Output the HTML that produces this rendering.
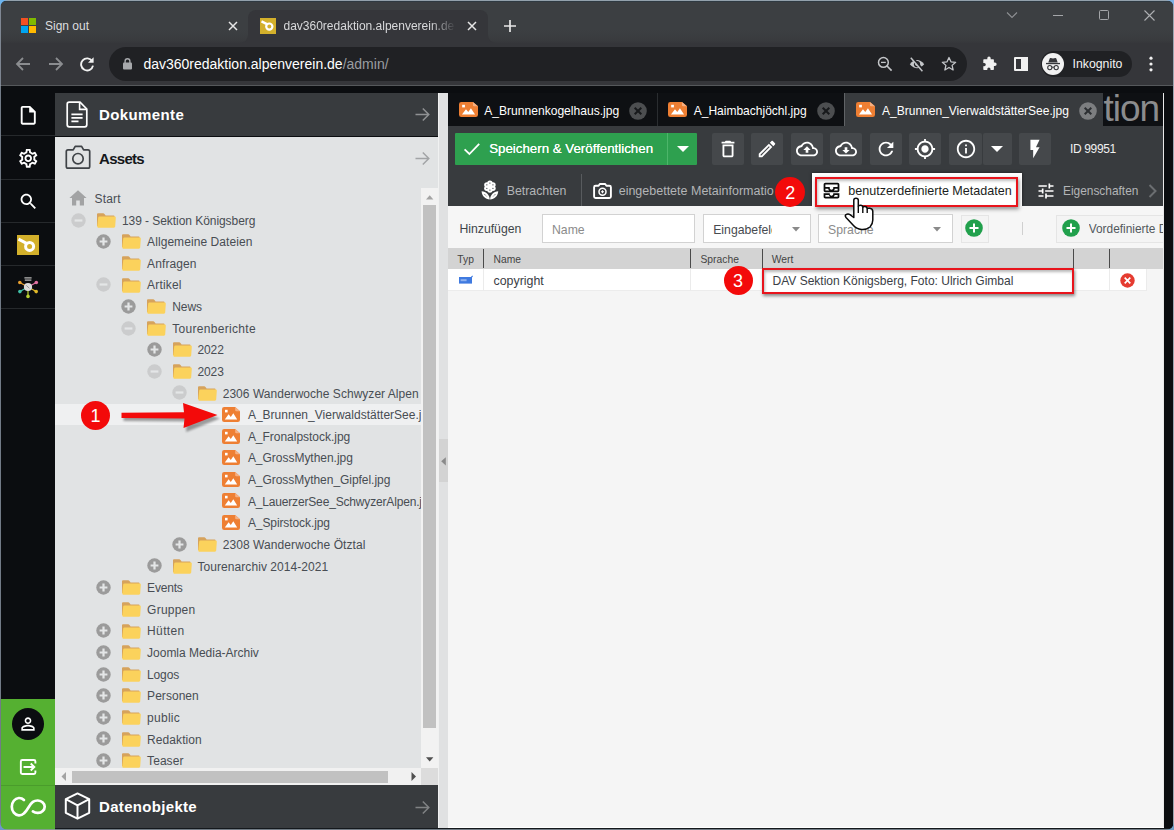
<!DOCTYPE html>
<html><head><meta charset="utf-8"><title>dav360redaktion</title>
<style>
*{box-sizing:border-box}
html,body{margin:0;padding:0}
body{width:1174px;height:830px;position:relative;overflow:hidden;background:#0b0d10;font-family:"Liberation Sans",sans-serif;font-size:12px;color:#3b4046}
.a{position:absolute}
.ic{position:absolute;display:block}
.t{position:absolute;white-space:nowrap;line-height:18px}
.tl{position:absolute;white-space:nowrap;line-height:18px;font-size:12px;color:#484d53}
.tb{position:absolute;top:133px;height:32px;width:32px;background:#45484b;border-radius:2px}
.tb svg{position:absolute;left:0;top:0}
</style></head><body>

<!-- ================= CHROME FRAME ================= -->
<div class="a" id="frame" style="left:0;top:0;width:1174px;height:44px;background:linear-gradient(180deg,#3c3f42 0,#3c3f42 30px,#393b3e 40px,#35363a 44px)"></div>
<div class="a" id="toolbar" style="left:0;top:43px;width:1174px;height:42px;background:#35363a"></div>
<div class="a" style="left:0;top:85px;width:1174px;height:1px;background:#55585b"></div>
<!-- active tab -->
<div class="a" style="left:247.5px;top:10px;width:240.5px;height:34px;background:#35363a;border-radius:8px 8px 0 0"></div>
<svg class="ic" style="left:239.5px;top:35px" width="8" height="8"><path d="M8 0 V8 H0 A8 8 0 0 0 8 0Z" fill="#35363a"/></svg>
<svg class="ic" style="left:488px;top:35px" width="8" height="8"><path d="M0 0 V8 H8 A8 8 0 0 1 0 0Z" fill="#35363a"/></svg>
<!-- MS logo -->
<div class="a" style="left:21px;top:18px;width:7px;height:7px;background:#f25022"></div>
<div class="a" style="left:29px;top:18px;width:7px;height:7px;background:#7fba00"></div>
<div class="a" style="left:21px;top:26px;width:7px;height:7px;background:#00a4ef"></div>
<div class="a" style="left:29px;top:26px;width:7px;height:7px;background:#ffb900"></div>
<div class="t" style="left:45px;top:17px;font-size:12px;color:#dcdddf">Sign out</div>
<svg class="ic" style="left:227.5px;top:21px" width="10" height="10" viewBox="0 0 10 10"><path d="M1 1 L9 9 M9 1 L1 9" stroke="#e6e6e6" stroke-width="1.5"/></svg>
<!-- favicon -->
<svg class="ic" style="left:260px;top:18px" width="16" height="16" viewBox="0 0 16 16"><rect width="16" height="16" fill="#d3b02b"/><circle cx="9.3" cy="8.6" r="3.1" fill="none" stroke="#fff" stroke-width="2.2"/><path d="M1.5 3.4 L7.4 6.4" stroke="#fff" stroke-width="2.3"/></svg>
<div class="t" style="left:283.5px;top:17px;font-size:12px;color:#d8d9db;width:172px;overflow:hidden;-webkit-mask-image:linear-gradient(90deg,#000 85%,transparent 100%)">dav360redaktion.alpenverein.de</div>
<svg class="ic" style="left:467px;top:21px" width="10" height="10" viewBox="0 0 10 10"><path d="M1 1 L9 9 M9 1 L1 9" stroke="#e6e6e6" stroke-width="1.5"/></svg>
<svg class="ic" style="left:503px;top:19px" width="14" height="14" viewBox="0 0 14 14"><path d="M7 1 V13 M1 7 H13" stroke="#e8e8e8" stroke-width="1.7"/></svg>
<!-- window controls -->
<svg class="ic" style="left:1006px;top:10px" width="12" height="10" viewBox="0 0 12 10"><path d="M1 2.5 L6 7.5 L11 2.5" fill="none" stroke="#8e9093" stroke-width="1.1"/></svg>
<div class="a" style="left:1053px;top:15px;width:10px;height:1px;background:#a4a6a9"></div>
<div class="a" style="left:1099px;top:10px;width:10px;height:10px;border:1px solid #a4a6a9;border-radius:1.5px"></div>
<svg class="ic" style="left:1144px;top:10px" width="11" height="11" viewBox="0 0 11 11"><path d="M0.5 0.5 L10.5 10.5 M10.5 0.5 L0.5 10.5" stroke="#aeb0b3" stroke-width="1.1"/></svg>
<!-- nav buttons -->
<svg class="ic" style="left:15px;top:56px" width="16" height="16" viewBox="0 0 16 16"><path d="M15 8 H2.5 M8 2 L2 8 L8 14" fill="none" stroke="#8b8d90" stroke-width="1.8"/></svg>
<svg class="ic" style="left:48px;top:56px" width="16" height="16" viewBox="0 0 16 16"><path d="M1 8 H13.5 M8 2 L14 8 L8 14" fill="none" stroke="#8b8d90" stroke-width="1.8"/></svg>
<svg class="ic" style="left:79px;top:56px" width="16" height="16" viewBox="0 0 16 16"><path d="M13.2 5.2 A6 6 0 1 0 14 9.6" fill="none" stroke="#f1f1f1" stroke-width="1.9"/><path d="M14.6 1.2 V6.8 H9 Z" fill="#f1f1f1"/></svg>
<!-- omnibox -->
<div class="a" style="left:109px;top:47px;width:857.5px;height:34px;background:#202124;border-radius:17px"></div>
<svg class="ic" style="left:122.5px;top:58px" width="9" height="12" viewBox="0 0 9 12"><rect x="0" y="4.6" width="9" height="7" rx="1" fill="#a7a9ac"/><path d="M2.1 5 V3.2 A2.4 2.4 0 0 1 6.9 3.2 V5" fill="none" stroke="#a7a9ac" stroke-width="1.4"/></svg>
<div class="t" style="left:143.4px;top:55px;font-size:14px;color:#fff">dav360redaktion.alpenverein.de<span style="color:#9a9da1">/admin/</span></div>
<!-- omnibox right icons -->
<svg class="ic" style="left:877px;top:56px" width="16" height="16" viewBox="0 0 16 16"><circle cx="6.4" cy="6.4" r="4.9" fill="none" stroke="#c3c5c8" stroke-width="1.5"/><path d="M10 10 L14.6 14.6" stroke="#c3c5c8" stroke-width="1.7"/><path d="M4 6.4 H8.8" stroke="#c3c5c8" stroke-width="1.3"/></svg>
<svg class="ic" style="left:909px;top:56px" width="16" height="16" viewBox="0 0 16 16"><path d="M0.800 8.200 Q8 0 15.200 8.200 Q8 16.400 0.800 8.200 Z" fill="#c3c5c8"/><circle cx="8" cy="8.200" r="3.100" fill="#202124"/><circle cx="8" cy="8.200" r="1.700" fill="#c3c5c8"/><path d="M2.700 1.100 L14.300 14.700" stroke="#202124" stroke-width="2.600"/><path d="M1.800 1.800 L13.400 15.200" stroke="#c3c5c8" stroke-width="1.500"/></svg>
<svg class="ic" style="left:941px;top:56px" width="16" height="15" viewBox="0 0 17 16"><path d="M8.5 1.6 L10.6 6.2 L15.6 6.7 L11.8 10 L12.9 14.9 L8.5 12.3 L4.1 14.9 L5.2 10 L1.4 6.7 L6.4 6.2 Z" fill="none" stroke="#c3c5c8" stroke-width="1.4" stroke-linejoin="round"/></svg>
<!-- extensions puzzle -->
<svg class="ic" style="left:981px;top:56px" width="16" height="16" viewBox="0 0 16 16"><path d="M6.3 2.2 A1.7 1.7 0 0 1 9.7 2.2 V3.3 H12.2 Q12.9 3.3 12.9 4 V6.5 H13.9 A1.75 1.75 0 0 1 13.9 10 H12.9 V13.3 Q12.9 14 12.2 14 H9.5 V13 A1.6 1.6 0 0 0 6.3 13 V14 H3 Q2.3 14 2.3 13.3 V10.2 H3.2 A1.6 1.6 0 0 0 3.2 7 H2.3 V4 Q2.3 3.3 3 3.3 H6.3 Z" fill="#f1f1f1"/></svg>
<!-- side panel -->
<div class="a" style="left:1014px;top:57px;width:14px;height:14px;border:2px solid #f1f1f1;border-radius:1px"></div>
<div class="a" style="left:1021px;top:57px;width:7px;height:14px;background:#f1f1f1"></div>
<!-- inkognito pill -->
<div class="a" style="left:1041px;top:51px;width:91px;height:26px;background:#202124;border-radius:13px"></div>
<svg class="ic" style="left:1041.5px;top:53px" width="22" height="22" viewBox="0 0 22 22"><circle cx="11" cy="11" r="11" fill="#f1f1f1"/><path d="M6.3 9.6 L7.7 5.4 Q8 4.7 8.7 5 L11 5.6 L13.3 5 Q14 4.7 14.3 5.4 L15.7 9.6 Z" fill="#35363a"/><rect x="4" y="9.9" width="14" height="1.3" fill="#35363a"/><circle cx="7.8" cy="14.6" r="2.1" fill="none" stroke="#35363a" stroke-width="1.1"/><circle cx="14.2" cy="14.6" r="2.1" fill="none" stroke="#35363a" stroke-width="1.1"/><path d="M9.9 14.4 Q11 13.6 12.1 14.4" fill="none" stroke="#35363a" stroke-width="1"/></svg>
<div class="t" style="left:1072.5px;top:55px;font-size:12.3px;color:#f3f3f3">Inkognito</div>
<svg class="ic" style="left:1149px;top:56px" width="4" height="16" viewBox="0 0 4 16"><circle cx="2" cy="2.2" r="1.6" fill="#f1f1f1"/><circle cx="2" cy="8" r="1.6" fill="#f1f1f1"/><circle cx="2" cy="13.8" r="1.6" fill="#f1f1f1"/></svg>

<!-- ================= PAGE ================= -->
<!-- left nav -->
<div class="a" style="left:0;top:86px;width:55px;height:744px;background:#0b0d10"></div>
<div class="a" style="left:1px;top:135px;width:54px;height:1px;background:#26292c"></div>
<div class="a" style="left:1px;top:179px;width:54px;height:1px;background:#26292c"></div>
<div class="a" style="left:1px;top:222px;width:54px;height:1px;background:#26292c"></div>
<div class="a" style="left:1px;top:265px;width:54px;height:1px;background:#26292c"></div>
<div class="a" style="left:1px;top:308px;width:54px;height:1px;background:#26292c"></div>
<!-- nav icons -->
<svg class="ic" style="left:16.950px;top:103.650px" width="22.500" height="22.500" viewBox="0 0 24 24"><path fill="#fff" d="M14 2H6c-1.100 0-1.990.9-1.990 2L4 20c0 1.100.89 2 1.990 2H18c1.100 0 2-.9 2-2V8l-6-6zM6 20V4h7v5h5v11H6z"/></svg>
<svg class="ic" style="left:16.75px;top:146.65px" width="22.5" height="22.5" viewBox="0 0 24 24"><path fill="#fff" d="M19.43 12.98c.04-.32.07-.64.07-.98 0-.34-.03-.66-.07-.98l2.11-1.65c.19-.15.24-.42.12-.64l-2-3.46a.5.5 0 0 0-.61-.22l-2.49 1c-.52-.4-1.08-.73-1.69-.98l-.38-2.65A.488.488 0 0 0 14 2h-4c-.25 0-.46.18-.49.42l-.38 2.65c-.61.25-1.17.59-1.69.98l-2.49-1a.566.566 0 0 0-.18-.03c-.17 0-.34.09-.43.25l-2 3.46c-.13.22-.07.49.12.64l2.11 1.65c-.04.32-.07.65-.07.98 0 .33.03.66.07.98l-2.11 1.65c-.19.15-.24.42-.12.64l2 3.46a.5.5 0 0 0 .61.22l2.49-1c.52.4 1.08.73 1.69.98l.38 2.65c.03.24.24.42.49.42h4c.25 0 .46-.18.49-.42l.38-2.65c.61-.25 1.17-.59 1.69-.98l2.49 1c.06.02.12.03.18.03.17 0 .34-.09.43-.25l2-3.46c.12-.22.07-.49-.12-.64l-2.11-1.65zm-1.98-1.71c.04.31.05.52.05.73 0 .21-.02.43-.05.73l-.14 1.13.89.7 1.08.84-.7 1.21-1.27-.51-1.04-.42-.9.68c-.43.32-.84.56-1.25.73l-1.06.43-.16 1.13-.2 1.35h-1.4l-.19-1.35-.16-1.13-1.06-.43c-.43-.18-.83-.41-1.23-.71l-.91-.7-1.06.43-1.27.51-.7-1.21 1.08-.84.89-.7-.14-1.13c-.03-.31-.05-.54-.05-.74s.02-.43.05-.73l.14-1.13-.89-.7-1.08-.84.7-1.21 1.27.51 1.04.42.9-.68c.43-.32.84-.56 1.25-.73l1.06-.43.16-1.13.2-1.35h1.39l.19 1.35.16 1.13 1.06.43c.43.18.83.41 1.23.71l.91.7 1.06-.43 1.27-.51.7 1.21-1.07.85-.89.7.14 1.13zM12 8c-2.21 0-4 1.79-4 4s1.790 4 4 4 4-1.790 4-4-1.790-4-4-4zm0 6c-1.100 0-2-.9-2-2s.9-2 2-2 2 .9 2 2-.9 2-2 2z"/></svg>
<svg class="ic" style="left:17.800px;top:191.100px" width="21" height="21" viewBox="0 0 24 24"><path fill="#fff" d="M15.500 14h-.79l-.28-.27C15.410 12.590 16 11.110 16 9.500 16 5.910 13.090 3 9.500 3S3 5.910 3 9.500 5.910 16 9.500 16c1.610 0 3.090-.59 4.230-1.570l.27.280v.79l5 4.990L20.490 19l-4.990-5zm-6 0C7.010 14 5 11.990 5 9.500S7.010 5 9.500 5 14 7.010 14 9.500 11.990 14 9.500 14z"/></svg>
<svg class="ic" style="left:17px;top:234.5px" width="22" height="20.5" viewBox="0 0 22 20.5"><rect width="22" height="20.5" fill="#d3b02b"/><circle cx="12.6" cy="11.4" r="4" fill="none" stroke="#fff" stroke-width="3"/><path d="M1.5 4.2 L10 8.6" stroke="#fff" stroke-width="3"/></svg>
<!-- hub icon -->
<svg class="ic" style="left:17px;top:276px" width="22" height="24" viewBox="0 0 22 24"><g stroke-width="1.200" fill="none"><path d="M11 11 L2.800 6.500" stroke="#e8a030"/><path d="M11 11 L19.300 6.500" stroke="#e070a0"/><path d="M11 11 L2.900 15.600" stroke="#40c0a8"/><path d="M11 11 L19.200 15.600" stroke="#e0b828"/><path d="M11 11 L11 20.400" stroke="#b8d030"/></g><circle cx="2.800" cy="6.500" r="1.800" fill="#e8a030"/><circle cx="19.300" cy="6.500" r="1.800" fill="#e070a0"/><circle cx="2.900" cy="15.600" r="1.800" fill="#40c0a8"/><circle cx="19.200" cy="15.600" r="1.800" fill="#e0b828"/><circle cx="11" cy="20.400" r="1.800" fill="#b8d030"/><circle cx="11" cy="11" r="4.100" fill="#dcdcdc"/><path d="M9.300 9.400 L12.400 12.300" stroke="#999" stroke-width="1"/><rect x="7.400" y="1" width="7.200" height="1.700" fill="#8a8a8a"/><rect x="7.800" y="3.300" width="6.600" height="1.700" fill="#8a8a8a"/></svg>
<!-- green bottom -->
<div class="a" style="left:1px;top:699px;width:54px;height:131px;background:#55b031"></div>
<div class="a" style="left:1px;top:785px;width:54px;height:1px;background:#4a9c2b"></div>
<div class="a" style="left:11.600px;top:708px;width:32.400px;height:32.400px;border-radius:50%;background:#0b0d10"></div><svg class="ic" style="left:18.150px;top:714.200px" width="20" height="20" viewBox="0 0 24 24"><path fill="#fff" d="M12 5.900c1.160 0 2.100.94 2.100 2.100s-.94 2.100-2.100 2.100S9.900 9.160 9.900 8s.94-2.100 2.100-2.100m0 9c2.970 0 6.100 1.460 6.100 2.100v1.100H5.900V17c0-.64 3.130-2.100 6.100-2.100M12 4C9.790 4 8 5.790 8 8s1.790 4 4 4 4-1.790 4-4-1.790-4-4-4zm0 9c-2.670 0-8 1.340-8 4v3h16v-3c0-2.660-5.330-4-8-4z"/></svg>
<svg class="ic" style="left:19px;top:758px" width="19" height="18" viewBox="0 0 19 18"><path d="M16.400 5.600 V3.500 Q16.400 2.050 14.950 2.050 H3.300 Q1.850 2.050 1.850 3.500 V14.500 Q1.850 15.950 3.300 15.950 H14.950 Q16.400 15.950 16.400 14.500 V12.400" fill="none" stroke="#fff" stroke-width="1.900"/><path d="M4.500 9 H15 M11.700 5.500 L15.300 9 L11.700 12.500" fill="none" stroke="#fff" stroke-width="1.900"/></svg>
<svg class="ic" style="left:9px;top:795px" width="39" height="24" viewBox="0 0 39 24"><path d="M14.960 5.040 A7.400 8.700 0 1 0 14.960 18.360 C18.500 15.500 20 9.800 23.870 6.950 A7.200 6.200 0 1 1 23.870 16.450" fill="none" stroke="#fff" stroke-width="2.700" stroke-linecap="round"/></svg>

<!-- tree panel -->
<div class="a" style="left:55px;top:93px;width:383px;height:43.300px;background:#383b3e"></div>
<div class="a" style="left:55px;top:136.500px;width:383px;height:648.500px;background:#e1e3e4"></div>
<div class="a" style="left:55px;top:785px;width:383px;height:43px;background:#383b3e"></div>
<!-- Dokumente header -->
<svg class="ic" style="left:66px;top:101px" width="22" height="27" viewBox="0 0 22 27"><path d="M3.200 1.200 H14 L20.800 8 V23.800 Q20.800 25.800 18.800 25.800 H3.200 Q1.200 25.800 1.200 23.800 V3.200 Q1.200 1.200 3.200 1.200 Z" fill="none" stroke="#fff" stroke-width="1.700" stroke-linejoin="round"/><path d="M13.600 1.600 V8.400 H20.400" fill="none" stroke="#fff" stroke-width="1.600"/><path d="M5.400 13.300 H16.600 M5.400 16.800 H16.600 M5.400 20.300 H12.500" stroke="#fff" stroke-width="1.700"/></svg>
<div class="t" style="left:99px;top:105.700px;font-size:15px;font-weight:700;color:#fff;letter-spacing:0.380px">Dokumente</div>
<svg class="ic" style="left:415px;top:107px" width="15" height="15" viewBox="0 0 15 15"><path d="M0.500 7.500 H13.500 M7.800 1.500 L13.800 7.500 L7.800 13.500" fill="none" stroke="#8f9193" stroke-width="1.500"/></svg>
<!-- Assets header -->
<svg class="ic" style="left:64.500px;top:145px" width="26" height="25" viewBox="0 0 26 25"><path d="M8.200 4.800 L10.200 1.300 H16.600 L18.600 4.800 H23 Q24.700 4.800 24.700 6.500 V21.500 Q24.700 23.200 23 23.200 H3 Q1.300 23.200 1.300 21.500 V6.500 Q1.300 4.800 3 4.800 Z" fill="none" stroke="#3f4347" stroke-width="1.700" stroke-linejoin="round"/><circle cx="13" cy="13.700" r="5.200" fill="none" stroke="#3f4347" stroke-width="1.700"/></svg>
<div class="t" style="left:99px;top:149.700px;font-size:15px;font-weight:700;color:#15181b;letter-spacing:-0.700px">Assets</div>
<svg class="ic" style="left:415px;top:151px" width="15" height="15" viewBox="0 0 15 15"><path d="M0.500 7.500 H13.500 M7.800 1.500 L13.800 7.500 L7.800 13.500" fill="none" stroke="#a2a4a6" stroke-width="1.500"/></svg>
<!-- selected row -->
<div class="a" style="left:55px;top:404px;width:366px;height:21px;background:#eff0f1"></div>
<!-- tree (clipped) -->
<div class="a" style="left:0;top:180px;width:420.500px;height:588px;overflow:hidden"><div class="a" style="left:0;top:-180px;width:500px;height:830px">
<svg class="ic" style="left:68.6px;top:190.2px" width="18" height="16" viewBox="0 0 18 16"><path d="M9 0.3 L17.6 8 L15 8 L15 15.5 L10.8 15.5 L10.8 10.4 L7.2 10.4 L7.2 15.5 L3 15.5 L3 8 L0.4 8 Z" fill="#a2a3a4"/></svg>
<div class="tl" style="left:94.5px;top:190.00px;letter-spacing:0.171px">Start</div>
<svg class="ic" style="left:70.9px;top:212.52px" width="15" height="15" viewBox="0 0 15 15"><circle cx="7.5" cy="7.5" r="7.2" fill="#cbcccd"/><path d="M3.6 7.5 H11.4" stroke="#e4e6e7" stroke-width="2.2"/></svg>
<svg class="ic" style="left:96.0px;top:212.72px" width="20" height="15" viewBox="0 0 20 15"><path d="M1 1.2 Q1 0.3 2 0.3 L7.2 0.3 Q8 0.3 8.5 1 L9.6 2.4 L17.6 2.4 Q18.6 2.4 18.6 3.4 L18.6 13 L1 13 Z" fill="#d6a35c"/><path d="M3.4 3.6 L18.8 3.6 Q19.9 3.6 19.8 4.7 L19.2 13.6 Q19.1 14.7 18 14.7 L2.2 14.7 Q1.1 14.7 1.2 13.6 L2.2 4.6 Q2.3 3.6 3.4 3.6 Z" fill="#fbd25c"/></svg>
<div class="tl" style="left:121.90px;top:211.62px;letter-spacing:-0.053px">139 - Sektion Königsberg</div>
<svg class="ic" style="left:96.1px;top:234.14px" width="15" height="15" viewBox="0 0 15 15"><circle cx="7.5" cy="7.5" r="7.2" fill="#9b9b9b"/><path d="M7.5 3.6 V11.4 M3.6 7.5 H11.4" stroke="#e4e6e7" stroke-width="2.2"/></svg>
<svg class="ic" style="left:121.2px;top:234.34px" width="20" height="15" viewBox="0 0 20 15"><path d="M1 1.2 Q1 0.3 2 0.3 L7.2 0.3 Q8 0.3 8.5 1 L9.6 2.4 L17.6 2.4 Q18.6 2.4 18.6 3.4 L18.6 13 L1 13 Z" fill="#d6a35c"/><path d="M3.4 3.6 L18.8 3.6 Q19.9 3.6 19.8 4.7 L19.2 13.6 Q19.1 14.7 18 14.7 L2.2 14.7 Q1.1 14.7 1.2 13.6 L2.2 4.6 Q2.3 3.6 3.4 3.6 Z" fill="#fbd25c"/></svg>
<div class="tl" style="left:147.10px;top:233.24px;letter-spacing:0.069px">Allgemeine Dateien</div>
<svg class="ic" style="left:121.2px;top:255.96px" width="20" height="15" viewBox="0 0 20 15"><path d="M1 1.2 Q1 0.3 2 0.3 L7.2 0.3 Q8 0.3 8.5 1 L9.6 2.4 L17.6 2.4 Q18.6 2.4 18.6 3.4 L18.6 13 L1 13 Z" fill="#d6a35c"/><path d="M3.4 3.6 L18.8 3.6 Q19.9 3.6 19.8 4.7 L19.2 13.6 Q19.1 14.7 18 14.7 L2.2 14.7 Q1.1 14.7 1.2 13.6 L2.2 4.6 Q2.3 3.6 3.4 3.6 Z" fill="#fbd25c"/></svg>
<div class="tl" style="left:147.10px;top:254.86px;letter-spacing:0.100px">Anfragen</div>
<svg class="ic" style="left:96.1px;top:277.38px" width="15" height="15" viewBox="0 0 15 15"><circle cx="7.5" cy="7.5" r="7.2" fill="#cbcccd"/><path d="M3.6 7.5 H11.4" stroke="#e4e6e7" stroke-width="2.2"/></svg>
<svg class="ic" style="left:121.2px;top:277.58px" width="20" height="15" viewBox="0 0 20 15"><path d="M1 1.2 Q1 0.3 2 0.3 L7.2 0.3 Q8 0.3 8.5 1 L9.6 2.4 L17.6 2.4 Q18.6 2.4 18.6 3.4 L18.6 13 L1 13 Z" fill="#d6a35c"/><path d="M3.4 3.6 L18.8 3.6 Q19.9 3.6 19.8 4.7 L19.2 13.6 Q19.1 14.7 18 14.7 L2.2 14.7 Q1.1 14.7 1.2 13.6 L2.2 4.6 Q2.3 3.6 3.4 3.6 Z" fill="#fbd25c"/></svg>
<div class="tl" style="left:147.10px;top:276.48px;letter-spacing:0.165px">Artikel</div>
<svg class="ic" style="left:121.3px;top:299.0px" width="15" height="15" viewBox="0 0 15 15"><circle cx="7.5" cy="7.5" r="7.2" fill="#9b9b9b"/><path d="M7.5 3.6 V11.4 M3.6 7.5 H11.4" stroke="#e4e6e7" stroke-width="2.2"/></svg>
<svg class="ic" style="left:146.4px;top:299.2px" width="20" height="15" viewBox="0 0 20 15"><path d="M1 1.2 Q1 0.3 2 0.3 L7.2 0.3 Q8 0.3 8.5 1 L9.6 2.4 L17.6 2.4 Q18.6 2.4 18.6 3.4 L18.6 13 L1 13 Z" fill="#d6a35c"/><path d="M3.4 3.6 L18.8 3.6 Q19.9 3.6 19.8 4.7 L19.2 13.6 Q19.1 14.7 18 14.7 L2.2 14.7 Q1.1 14.7 1.2 13.6 L2.2 4.6 Q2.3 3.6 3.4 3.6 Z" fill="#fbd25c"/></svg>
<div class="tl" style="left:172.30px;top:298.10px;letter-spacing:-0.104px">News</div>
<svg class="ic" style="left:121.3px;top:320.62px" width="15" height="15" viewBox="0 0 15 15"><circle cx="7.5" cy="7.5" r="7.2" fill="#cbcccd"/><path d="M3.6 7.5 H11.4" stroke="#e4e6e7" stroke-width="2.2"/></svg>
<svg class="ic" style="left:146.4px;top:320.82px" width="20" height="15" viewBox="0 0 20 15"><path d="M1 1.2 Q1 0.3 2 0.3 L7.2 0.3 Q8 0.3 8.5 1 L9.6 2.4 L17.6 2.4 Q18.6 2.4 18.6 3.4 L18.6 13 L1 13 Z" fill="#d6a35c"/><path d="M3.4 3.6 L18.8 3.6 Q19.9 3.6 19.8 4.7 L19.2 13.6 Q19.1 14.7 18 14.7 L2.2 14.7 Q1.1 14.7 1.2 13.6 L2.2 4.6 Q2.3 3.6 3.4 3.6 Z" fill="#fbd25c"/></svg>
<div class="tl" style="left:172.30px;top:319.72px;letter-spacing:0.301px">Tourenberichte</div>
<svg class="ic" style="left:146.5px;top:342.24px" width="15" height="15" viewBox="0 0 15 15"><circle cx="7.5" cy="7.5" r="7.2" fill="#9b9b9b"/><path d="M7.5 3.6 V11.4 M3.6 7.5 H11.4" stroke="#e4e6e7" stroke-width="2.2"/></svg>
<svg class="ic" style="left:171.6px;top:342.44px" width="20" height="15" viewBox="0 0 20 15"><path d="M1 1.2 Q1 0.3 2 0.3 L7.2 0.3 Q8 0.3 8.5 1 L9.6 2.4 L17.6 2.4 Q18.6 2.4 18.6 3.4 L18.6 13 L1 13 Z" fill="#d6a35c"/><path d="M3.4 3.6 L18.8 3.6 Q19.9 3.6 19.8 4.7 L19.2 13.6 Q19.1 14.7 18 14.7 L2.2 14.7 Q1.1 14.7 1.2 13.6 L2.2 4.6 Q2.3 3.6 3.4 3.6 Z" fill="#fbd25c"/></svg>
<div class="tl" style="left:197.50px;top:341.34px;letter-spacing:-0.126px">2022</div>
<svg class="ic" style="left:146.5px;top:363.86px" width="15" height="15" viewBox="0 0 15 15"><circle cx="7.5" cy="7.5" r="7.2" fill="#cbcccd"/><path d="M3.6 7.5 H11.4" stroke="#e4e6e7" stroke-width="2.2"/></svg>
<svg class="ic" style="left:171.6px;top:364.06px" width="20" height="15" viewBox="0 0 20 15"><path d="M1 1.2 Q1 0.3 2 0.3 L7.2 0.3 Q8 0.3 8.5 1 L9.6 2.4 L17.6 2.4 Q18.6 2.4 18.6 3.4 L18.6 13 L1 13 Z" fill="#d6a35c"/><path d="M3.4 3.6 L18.8 3.6 Q19.9 3.6 19.8 4.7 L19.2 13.6 Q19.1 14.7 18 14.7 L2.2 14.7 Q1.1 14.7 1.2 13.6 L2.2 4.6 Q2.3 3.6 3.4 3.6 Z" fill="#fbd25c"/></svg>
<div class="tl" style="left:197.50px;top:362.96px;letter-spacing:-0.126px">2023</div>
<svg class="ic" style="left:171.7px;top:385.48px" width="15" height="15" viewBox="0 0 15 15"><circle cx="7.5" cy="7.5" r="7.2" fill="#cbcccd"/><path d="M3.6 7.5 H11.4" stroke="#e4e6e7" stroke-width="2.2"/></svg>
<svg class="ic" style="left:196.8px;top:385.68px" width="20" height="15" viewBox="0 0 20 15"><path d="M1 1.2 Q1 0.3 2 0.3 L7.2 0.3 Q8 0.3 8.5 1 L9.6 2.4 L17.6 2.4 Q18.6 2.4 18.6 3.4 L18.6 13 L1 13 Z" fill="#d6a35c"/><path d="M3.4 3.6 L18.8 3.6 Q19.9 3.6 19.8 4.7 L19.2 13.6 Q19.1 14.7 18 14.7 L2.2 14.7 Q1.1 14.7 1.2 13.6 L2.2 4.6 Q2.3 3.6 3.4 3.6 Z" fill="#fbd25c"/></svg>
<div class="tl" style="left:222.70px;top:384.58px;letter-spacing:0.032px">2306 Wanderwoche Schwyzer Alpen</div>
<svg class="ic" style="left:222.2px;top:406.9px" width="18" height="15" viewBox="0 0 18 15"><path d="M2.2 0 L13.2 0 L18 4.3 L18 12.8 Q18 15 15.8 15 L2.2 15 Q0 15 0 12.8 L0 2.2 Q0 0 2.2 0 Z" fill="#ee7f33"/><path d="M13.2 0 L13.2 3.2 Q13.2 4.3 14.3 4.3 L18 4.3 Z" fill="#f6b082"/><rect x="3" y="2.8" width="2.6" height="2.6" fill="#fff"/><path d="M2.8 12.4 L6.6 7.2 L8.8 10 L11.3 6.2 L15.2 12.4 Z" fill="#fff"/></svg>
<div class="tl" style="left:247.90px;top:406.20px;letter-spacing:0.013px">A_Brunnen_VierwaldstätterSee.jpg</div>
<svg class="ic" style="left:222.2px;top:428.52px" width="18" height="15" viewBox="0 0 18 15"><path d="M2.2 0 L13.2 0 L18 4.3 L18 12.8 Q18 15 15.8 15 L2.2 15 Q0 15 0 12.8 L0 2.2 Q0 0 2.2 0 Z" fill="#ee7f33"/><path d="M13.2 0 L13.2 3.2 Q13.2 4.3 14.3 4.3 L18 4.3 Z" fill="#f6b082"/><rect x="3" y="2.8" width="2.6" height="2.6" fill="#fff"/><path d="M2.8 12.4 L6.6 7.2 L8.8 10 L11.3 6.2 L15.2 12.4 Z" fill="#fff"/></svg>
<div class="tl" style="left:247.90px;top:427.82px;letter-spacing:-0.024px">A_Fronalpstock.jpg</div>
<svg class="ic" style="left:222.2px;top:450.14px" width="18" height="15" viewBox="0 0 18 15"><path d="M2.2 0 L13.2 0 L18 4.3 L18 12.8 Q18 15 15.8 15 L2.2 15 Q0 15 0 12.8 L0 2.2 Q0 0 2.2 0 Z" fill="#ee7f33"/><path d="M13.2 0 L13.2 3.2 Q13.2 4.3 14.3 4.3 L18 4.3 Z" fill="#f6b082"/><rect x="3" y="2.8" width="2.6" height="2.6" fill="#fff"/><path d="M2.8 12.4 L6.6 7.2 L8.8 10 L11.3 6.2 L15.2 12.4 Z" fill="#fff"/></svg>
<div class="tl" style="left:247.90px;top:449.44px;letter-spacing:-0.023px">A_GrossMythen.jpg</div>
<svg class="ic" style="left:222.2px;top:471.76px" width="18" height="15" viewBox="0 0 18 15"><path d="M2.2 0 L13.2 0 L18 4.3 L18 12.8 Q18 15 15.8 15 L2.2 15 Q0 15 0 12.8 L0 2.2 Q0 0 2.2 0 Z" fill="#ee7f33"/><path d="M13.2 0 L13.2 3.2 Q13.2 4.3 14.3 4.3 L18 4.3 Z" fill="#f6b082"/><rect x="3" y="2.8" width="2.6" height="2.6" fill="#fff"/><path d="M2.8 12.4 L6.6 7.2 L8.8 10 L11.3 6.2 L15.2 12.4 Z" fill="#fff"/></svg>
<div class="tl" style="left:247.90px;top:471.06px;letter-spacing:-0.042px">A_GrossMythen_Gipfel.jpg</div>
<svg class="ic" style="left:222.2px;top:493.38px" width="18" height="15" viewBox="0 0 18 15"><path d="M2.2 0 L13.2 0 L18 4.3 L18 12.8 Q18 15 15.8 15 L2.2 15 Q0 15 0 12.8 L0 2.2 Q0 0 2.2 0 Z" fill="#ee7f33"/><path d="M13.2 0 L13.2 3.2 Q13.2 4.3 14.3 4.3 L18 4.3 Z" fill="#f6b082"/><rect x="3" y="2.8" width="2.6" height="2.6" fill="#fff"/><path d="M2.8 12.4 L6.6 7.2 L8.8 10 L11.3 6.2 L15.2 12.4 Z" fill="#fff"/></svg>
<div class="tl" style="left:247.90px;top:492.68px;letter-spacing:-0.165px">A_LauerzerSee_SchwyzerAlpen.jpg</div>
<svg class="ic" style="left:222.2px;top:515.0px" width="18" height="15" viewBox="0 0 18 15"><path d="M2.2 0 L13.2 0 L18 4.3 L18 12.8 Q18 15 15.8 15 L2.2 15 Q0 15 0 12.8 L0 2.2 Q0 0 2.2 0 Z" fill="#ee7f33"/><path d="M13.2 0 L13.2 3.2 Q13.2 4.3 14.3 4.3 L18 4.3 Z" fill="#f6b082"/><rect x="3" y="2.8" width="2.6" height="2.6" fill="#fff"/><path d="M2.8 12.4 L6.6 7.2 L8.8 10 L11.3 6.2 L15.2 12.4 Z" fill="#fff"/></svg>
<div class="tl" style="left:247.90px;top:514.30px;letter-spacing:-0.092px">A_Spirstock.jpg</div>
<svg class="ic" style="left:171.7px;top:536.82px" width="15" height="15" viewBox="0 0 15 15"><circle cx="7.5" cy="7.5" r="7.2" fill="#9b9b9b"/><path d="M7.5 3.6 V11.4 M3.6 7.5 H11.4" stroke="#e4e6e7" stroke-width="2.2"/></svg>
<svg class="ic" style="left:196.8px;top:537.02px" width="20" height="15" viewBox="0 0 20 15"><path d="M1 1.2 Q1 0.3 2 0.3 L7.2 0.3 Q8 0.3 8.5 1 L9.6 2.4 L17.6 2.4 Q18.6 2.4 18.6 3.4 L18.6 13 L1 13 Z" fill="#d6a35c"/><path d="M3.4 3.6 L18.8 3.6 Q19.9 3.6 19.8 4.7 L19.2 13.6 Q19.1 14.7 18 14.7 L2.2 14.7 Q1.1 14.7 1.2 13.6 L2.2 4.6 Q2.3 3.6 3.4 3.6 Z" fill="#fbd25c"/></svg>
<div class="tl" style="left:222.70px;top:535.92px;letter-spacing:0.080px">2308 Wanderwoche Ötztal</div>
<svg class="ic" style="left:146.5px;top:558.44px" width="15" height="15" viewBox="0 0 15 15"><circle cx="7.5" cy="7.5" r="7.2" fill="#9b9b9b"/><path d="M7.5 3.6 V11.4 M3.6 7.5 H11.4" stroke="#e4e6e7" stroke-width="2.2"/></svg>
<svg class="ic" style="left:171.6px;top:558.64px" width="20" height="15" viewBox="0 0 20 15"><path d="M1 1.2 Q1 0.3 2 0.3 L7.2 0.3 Q8 0.3 8.5 1 L9.6 2.4 L17.6 2.4 Q18.6 2.4 18.6 3.4 L18.6 13 L1 13 Z" fill="#d6a35c"/><path d="M3.4 3.6 L18.8 3.6 Q19.9 3.6 19.8 4.7 L19.2 13.6 Q19.1 14.7 18 14.7 L2.2 14.7 Q1.1 14.7 1.2 13.6 L2.2 4.6 Q2.3 3.6 3.4 3.6 Z" fill="#fbd25c"/></svg>
<div class="tl" style="left:197.50px;top:557.54px;letter-spacing:0.063px">Tourenarchiv 2014-2021</div>
<svg class="ic" style="left:96.1px;top:580.06px" width="15" height="15" viewBox="0 0 15 15"><circle cx="7.5" cy="7.5" r="7.2" fill="#9b9b9b"/><path d="M7.5 3.6 V11.4 M3.6 7.5 H11.4" stroke="#e4e6e7" stroke-width="2.2"/></svg>
<svg class="ic" style="left:121.2px;top:580.26px" width="20" height="15" viewBox="0 0 20 15"><path d="M1 1.2 Q1 0.3 2 0.3 L7.2 0.3 Q8 0.3 8.5 1 L9.6 2.4 L17.6 2.4 Q18.6 2.4 18.6 3.4 L18.6 13 L1 13 Z" fill="#d6a35c"/><path d="M3.4 3.6 L18.8 3.6 Q19.9 3.6 19.8 4.7 L19.2 13.6 Q19.1 14.7 18 14.7 L2.2 14.7 Q1.1 14.7 1.2 13.6 L2.2 4.6 Q2.3 3.6 3.4 3.6 Z" fill="#fbd25c"/></svg>
<div class="tl" style="left:147.10px;top:579.16px;letter-spacing:-0.181px">Events</div>
<svg class="ic" style="left:121.2px;top:601.88px" width="20" height="15" viewBox="0 0 20 15"><path d="M1 1.2 Q1 0.3 2 0.3 L7.2 0.3 Q8 0.3 8.5 1 L9.6 2.4 L17.6 2.4 Q18.6 2.4 18.6 3.4 L18.6 13 L1 13 Z" fill="#d6a35c"/><path d="M3.4 3.6 L18.8 3.6 Q19.9 3.6 19.8 4.7 L19.2 13.6 Q19.1 14.7 18 14.7 L2.2 14.7 Q1.1 14.7 1.2 13.6 L2.2 4.6 Q2.3 3.6 3.4 3.6 Z" fill="#fbd25c"/></svg>
<div class="tl" style="left:147.10px;top:600.78px;letter-spacing:0.228px">Gruppen</div>
<svg class="ic" style="left:96.1px;top:623.3px" width="15" height="15" viewBox="0 0 15 15"><circle cx="7.5" cy="7.5" r="7.2" fill="#9b9b9b"/><path d="M7.5 3.6 V11.4 M3.6 7.5 H11.4" stroke="#e4e6e7" stroke-width="2.2"/></svg>
<svg class="ic" style="left:121.2px;top:623.5px" width="20" height="15" viewBox="0 0 20 15"><path d="M1 1.2 Q1 0.3 2 0.3 L7.2 0.3 Q8 0.3 8.5 1 L9.6 2.4 L17.6 2.4 Q18.6 2.4 18.6 3.4 L18.6 13 L1 13 Z" fill="#d6a35c"/><path d="M3.4 3.6 L18.8 3.6 Q19.9 3.6 19.8 4.7 L19.2 13.6 Q19.1 14.7 18 14.7 L2.2 14.7 Q1.1 14.7 1.2 13.6 L2.2 4.6 Q2.3 3.6 3.4 3.6 Z" fill="#fbd25c"/></svg>
<div class="tl" style="left:147.10px;top:622.40px;letter-spacing:0.357px">Hütten</div>
<svg class="ic" style="left:96.1px;top:644.92px" width="15" height="15" viewBox="0 0 15 15"><circle cx="7.5" cy="7.5" r="7.2" fill="#9b9b9b"/><path d="M7.5 3.6 V11.4 M3.6 7.5 H11.4" stroke="#e4e6e7" stroke-width="2.2"/></svg>
<svg class="ic" style="left:121.2px;top:645.12px" width="20" height="15" viewBox="0 0 20 15"><path d="M1 1.2 Q1 0.3 2 0.3 L7.2 0.3 Q8 0.3 8.5 1 L9.6 2.4 L17.6 2.4 Q18.6 2.4 18.6 3.4 L18.6 13 L1 13 Z" fill="#d6a35c"/><path d="M3.4 3.6 L18.8 3.6 Q19.9 3.6 19.8 4.7 L19.2 13.6 Q19.1 14.7 18 14.7 L2.2 14.7 Q1.1 14.7 1.2 13.6 L2.2 4.6 Q2.3 3.6 3.4 3.6 Z" fill="#fbd25c"/></svg>
<div class="tl" style="left:147.10px;top:644.02px;letter-spacing:-0.018px">Joomla Media-Archiv</div>
<svg class="ic" style="left:96.1px;top:666.54px" width="15" height="15" viewBox="0 0 15 15"><circle cx="7.5" cy="7.5" r="7.2" fill="#9b9b9b"/><path d="M7.5 3.6 V11.4 M3.6 7.5 H11.4" stroke="#e4e6e7" stroke-width="2.2"/></svg>
<svg class="ic" style="left:121.2px;top:666.74px" width="20" height="15" viewBox="0 0 20 15"><path d="M1 1.2 Q1 0.3 2 0.3 L7.2 0.3 Q8 0.3 8.5 1 L9.6 2.4 L17.6 2.4 Q18.6 2.4 18.6 3.4 L18.6 13 L1 13 Z" fill="#d6a35c"/><path d="M3.4 3.6 L18.8 3.6 Q19.9 3.6 19.8 4.7 L19.2 13.6 Q19.1 14.7 18 14.7 L2.2 14.7 Q1.1 14.7 1.2 13.6 L2.2 4.6 Q2.3 3.6 3.4 3.6 Z" fill="#fbd25c"/></svg>
<div class="tl" style="left:147.10px;top:665.64px;letter-spacing:-0.161px">Logos</div>
<svg class="ic" style="left:96.1px;top:688.16px" width="15" height="15" viewBox="0 0 15 15"><circle cx="7.5" cy="7.5" r="7.2" fill="#9b9b9b"/><path d="M7.5 3.6 V11.4 M3.6 7.5 H11.4" stroke="#e4e6e7" stroke-width="2.2"/></svg>
<svg class="ic" style="left:121.2px;top:688.36px" width="20" height="15" viewBox="0 0 20 15"><path d="M1 1.2 Q1 0.3 2 0.3 L7.2 0.3 Q8 0.3 8.5 1 L9.6 2.4 L17.6 2.4 Q18.6 2.4 18.6 3.4 L18.6 13 L1 13 Z" fill="#d6a35c"/><path d="M3.4 3.6 L18.8 3.6 Q19.9 3.6 19.8 4.7 L19.2 13.6 Q19.1 14.7 18 14.7 L2.2 14.7 Q1.1 14.7 1.2 13.6 L2.2 4.6 Q2.3 3.6 3.4 3.6 Z" fill="#fbd25c"/></svg>
<div class="tl" style="left:147.10px;top:687.26px;letter-spacing:0.041px">Personen</div>
<svg class="ic" style="left:96.1px;top:709.78px" width="15" height="15" viewBox="0 0 15 15"><circle cx="7.5" cy="7.5" r="7.2" fill="#9b9b9b"/><path d="M7.5 3.6 V11.4 M3.6 7.5 H11.4" stroke="#e4e6e7" stroke-width="2.2"/></svg>
<svg class="ic" style="left:121.2px;top:709.98px" width="20" height="15" viewBox="0 0 20 15"><path d="M1 1.2 Q1 0.3 2 0.3 L7.2 0.3 Q8 0.3 8.5 1 L9.6 2.4 L17.6 2.4 Q18.6 2.4 18.6 3.4 L18.6 13 L1 13 Z" fill="#d6a35c"/><path d="M3.4 3.6 L18.8 3.6 Q19.9 3.6 19.8 4.7 L19.2 13.6 Q19.1 14.7 18 14.7 L2.2 14.7 Q1.1 14.7 1.2 13.6 L2.2 4.6 Q2.3 3.6 3.4 3.6 Z" fill="#fbd25c"/></svg>
<div class="tl" style="left:147.10px;top:708.88px;letter-spacing:0.273px">public</div>
<svg class="ic" style="left:96.1px;top:731.4px" width="15" height="15" viewBox="0 0 15 15"><circle cx="7.5" cy="7.5" r="7.2" fill="#9b9b9b"/><path d="M7.5 3.6 V11.4 M3.6 7.5 H11.4" stroke="#e4e6e7" stroke-width="2.2"/></svg>
<svg class="ic" style="left:121.2px;top:731.6px" width="20" height="15" viewBox="0 0 20 15"><path d="M1 1.2 Q1 0.3 2 0.3 L7.2 0.3 Q8 0.3 8.5 1 L9.6 2.4 L17.6 2.4 Q18.6 2.4 18.6 3.4 L18.6 13 L1 13 Z" fill="#d6a35c"/><path d="M3.4 3.6 L18.8 3.6 Q19.9 3.6 19.8 4.7 L19.2 13.6 Q19.1 14.7 18 14.7 L2.2 14.7 Q1.1 14.7 1.2 13.6 L2.2 4.6 Q2.3 3.6 3.4 3.6 Z" fill="#fbd25c"/></svg>
<div class="tl" style="left:147.10px;top:730.50px;letter-spacing:0.073px">Redaktion</div>
<svg class="ic" style="left:96.1px;top:753.02px" width="15" height="15" viewBox="0 0 15 15"><circle cx="7.5" cy="7.5" r="7.2" fill="#9b9b9b"/><path d="M7.5 3.6 V11.4 M3.6 7.5 H11.4" stroke="#e4e6e7" stroke-width="2.2"/></svg>
<svg class="ic" style="left:121.2px;top:753.22px" width="20" height="15" viewBox="0 0 20 15"><path d="M1 1.2 Q1 0.3 2 0.3 L7.2 0.3 Q8 0.3 8.5 1 L9.6 2.4 L17.6 2.4 Q18.6 2.4 18.6 3.4 L18.6 13 L1 13 Z" fill="#d6a35c"/><path d="M3.4 3.6 L18.8 3.6 Q19.9 3.6 19.8 4.7 L19.2 13.6 Q19.1 14.7 18 14.7 L2.2 14.7 Q1.1 14.7 1.2 13.6 L2.2 4.6 Q2.3 3.6 3.4 3.6 Z" fill="#fbd25c"/></svg>
<div class="tl" style="left:147.10px;top:752.12px;letter-spacing:0.061px">Teaser</div>
</div></div>
<!-- v scrollbar -->
<div class="a" style="left:421.300px;top:187.500px;width:17.700px;height:580.500px;background:#f2f2f2"></div>
<div class="a" style="left:423.200px;top:205px;width:12.700px;height:522.500px;background:#c1c1c1"></div>
<svg class="ic" style="left:426px;top:194.500px" width="8" height="5"><path d="M0 4.500 L3.700 0.300 L7.400 4.500 Z" fill="#a3a3a3"/></svg>
<svg class="ic" style="left:426px;top:756.800px" width="8" height="5"><path d="M0 0.300 L3.700 4.500 L7.400 0.300 Z" fill="#505050"/></svg>
<!-- h scrollbar -->
<div class="a" style="left:55px;top:768px;width:366px;height:17px;background:#f1f1f1"></div>
<div class="a" style="left:421px;top:768px;width:17px;height:17px;background:#dcdcdc"></div>
<div class="a" style="left:72px;top:770.500px;width:315.500px;height:12px;background:#c1c1c1"></div>
<svg class="ic" style="left:60.500px;top:772px" width="6" height="9"><path d="M5 0 L0.500 4.500 L5 9 Z" fill="#a3a3a3"/></svg>
<svg class="ic" style="left:410.500px;top:772px" width="6" height="9"><path d="M0.500 0 L5 4.500 L0.500 9 Z" fill="#505050"/></svg>
<!-- Datenobjekte -->
<svg class="ic" style="left:64.200px;top:791.800px" width="27" height="28" viewBox="0 0 27 28"><path d="M13.500 1.400 L25.200 7.200 V20.800 L13.500 26.700 L1.800 20.800 V7.200 Z M1.800 7.200 L13.500 13.300 L25.200 7.200 M13.500 13.300 V26.700" fill="none" stroke="#fff" stroke-width="2" stroke-linejoin="round"/></svg>
<div class="t" style="left:99px;top:797.500px;font-size:15px;font-weight:700;color:#fff;letter-spacing:0.320px">Datenobjekte</div>
<svg class="ic" style="left:415px;top:799.500px" width="15" height="15" viewBox="0 0 15 15"><path d="M0.500 7.500 H13.500 M7.800 1.500 L13.800 7.500 L7.800 13.500" fill="none" stroke="#808284" stroke-width="1.500"/></svg>

<!-- splitter -->
<div class="a" style="left:438px;top:93px;width:10px;height:735px;background:#e0e1e2"></div>
<div class="a" style="left:438.200px;top:93px;width:1.100px;height:735px;background:#f0f1f1"></div>
<div class="a" style="left:439.300px;top:438.800px;width:8.700px;height:43.400px;background:#d3d3d3"></div>
<svg class="ic" style="left:441.300px;top:456.500px" width="5" height="9"><path d="M4.800 0.200 L0.200 4.200 L4.800 8.400 Z" fill="#8a8a8a"/></svg>

<!--RIGHT_START-->
<!-- ================= RIGHT PANEL ================= -->
<!-- tabs bar -->
<div class="a" style="left:448px;top:93px;width:715px;height:33px;background:#0e1013"></div>
<!-- big "tion" text behind -->
<div class="a" style="left:1102px;top:93px;width:61px;height:33px;overflow:hidden"><div class="t" style="left:1.500px;top:-6.500px;font-size:37px;line-height:44px;color:#8b8c8d;letter-spacing:-1px">tion</div></div>
<!-- tab 1 -->
<svg class="ic" style="left:458.700px;top:102px" width="19" height="15" viewBox="0 0 18 15" preserveAspectRatio="none"><path d="M2.200 0 L13.200 0 L18 4.300 L18 12.800 Q18 15 15.800 15 L2.200 15 Q0 15 0 12.800 L0 2.200 Q0 0 2.200 0 Z" fill="#ee7f33"/><path d="M13.200 0 L13.200 3.200 Q13.200 4.300 14.300 4.300 L18 4.300 Z" fill="#f6b082"/><rect x="3" y="2.800" width="2.600" height="2.600" fill="#fff"/><path d="M2.800 12.400 L6.600 7.200 L8.800 10 L11.300 6.200 L15.200 12.400 Z" fill="#fff"/></svg>
<div class="t" style="left:484.200px;top:101.500px;font-size:12.080px;color:#fff">A_Brunnenkogelhaus.jpg</div>
<svg class="ic" style="left:628.500px;top:101.500px" width="18" height="18" viewBox="0 0 18 18"><circle cx="9" cy="9" r="8.800" fill="#4c4e50"/><path d="M5.700 5.700 L12.300 12.300 M12.300 5.700 L5.700 12.300" stroke="#17191b" stroke-width="2"/></svg>
<div class="a" style="left:656.500px;top:93px;width:1px;height:33px;background:#2a2d30"></div>
<!-- tab 2 -->
<svg class="ic" style="left:667.500px;top:102px" width="19" height="15" viewBox="0 0 18 15" preserveAspectRatio="none"><path d="M2.200 0 L13.200 0 L18 4.300 L18 12.800 Q18 15 15.800 15 L2.200 15 Q0 15 0 12.800 L0 2.200 Q0 0 2.200 0 Z" fill="#ee7f33"/><path d="M13.200 0 L13.200 3.200 Q13.200 4.300 14.300 4.300 L18 4.300 Z" fill="#f6b082"/><rect x="3" y="2.800" width="2.600" height="2.600" fill="#fff"/><path d="M2.800 12.400 L6.600 7.200 L8.800 10 L11.300 6.200 L15.200 12.400 Z" fill="#fff"/></svg>
<div class="t" style="left:693.700px;top:101.500px;font-size:12.030px;color:#fff">A_Haimbachjöchl.jpg</div>
<svg class="ic" style="left:816.800px;top:101.500px" width="18" height="18" viewBox="0 0 18 18"><circle cx="9" cy="9" r="8.800" fill="#4c4e50"/><path d="M5.700 5.700 L12.300 12.300 M12.300 5.700 L5.700 12.300" stroke="#17191b" stroke-width="2"/></svg>
<!-- tab 3 (active) -->
<div class="a" style="left:844px;top:93px;width:258.500px;height:33px;background:#383b3e;border-left:1px solid #606366"></div>
<svg class="ic" style="left:855.700px;top:102px" width="19" height="15" viewBox="0 0 18 15" preserveAspectRatio="none"><path d="M2.200 0 L13.200 0 L18 4.300 L18 12.800 Q18 15 15.800 15 L2.200 15 Q0 15 0 12.800 L0 2.200 Q0 0 2.200 0 Z" fill="#ee7f33"/><path d="M13.200 0 L13.200 3.200 Q13.200 4.300 14.300 4.300 L18 4.300 Z" fill="#f6b082"/><rect x="3" y="2.800" width="2.600" height="2.600" fill="#fff"/><path d="M2.800 12.400 L6.600 7.200 L8.800 10 L11.300 6.200 L15.200 12.400 Z" fill="#fff"/></svg>
<div class="t" style="left:882px;top:101.500px;font-size:12.030px;color:#fff">A_Brunnen_VierwaldstätterSee.jpg</div>
<svg class="ic" style="left:1079px;top:101.500px" width="18" height="18" viewBox="0 0 18 18"><circle cx="9" cy="9" r="8.800" fill="#7c7e80"/><path d="M5.700 5.700 L12.300 12.300 M12.300 5.700 L5.700 12.300" stroke="#2c2f32" stroke-width="2"/></svg>

<!-- toolbar + subtab bar background -->
<div class="a" style="left:448px;top:126px;width:715px;height:80px;background:#383b3e"></div>
<!-- green save button -->
<div class="a" style="left:455px;top:133px;width:241.500px;height:32px;background:#2ea04f;border-radius:1px"></div>
<div class="a" style="left:666.500px;top:133px;width:1px;height:32px;background:#4db56a"></div>
<svg class="ic" style="left:462px;top:140px" width="20" height="18" viewBox="0 0 20 18"><path d="M2.600 9.300 L7.400 14 L17.200 3.800" fill="none" stroke="#fff" stroke-width="1.800"/></svg>
<div class="t" style="left:489.200px;top:139.500px;font-size:13.300px;color:#fff;text-shadow:0 0 0.400px #fff">Speichern &amp; Veröffentlichen</div>
<svg class="ic" style="left:676.500px;top:145.500px" width="12" height="6"><path d="M0 0 H12 L6 6 Z" fill="#fff"/></svg>
<!-- toolbar buttons -->
<div class="tb" style="left:712px"><svg style="left:5px;top:5px" width="22" height="22" viewBox="0 0 24 24"><path fill="#fff" d="M6 19c0 1.100.9 2 2 2h8c1.100 0 2-.9 2-2V7H6v12zM8 9h8v10H8V9zm7.500-5l-1-1h-5l-1 1H5v2h14V4h-3.500z"/></svg></div>
<div class="tb" style="left:751.400px"><svg style="left:5px;top:5px" width="22" height="22" viewBox="0 0 24 24"><path fill="#fff" d="M14.060 9.020l.92.920L5.920 19H5v-.92l9.060-9.060M17.660 3c-.25 0-.51.100-.7.290l-1.830 1.830 3.750 3.750 1.830-1.830c.39-.39.39-1.020 0-1.410l-2.340-2.340c-.2-.2-.45-.29-.71-.29zm-3.600 3.190L3 17.250V21h3.750L17.810 9.940l-3.750-3.750z"/></svg></div>
<div class="tb" style="left:790.800px"><svg style="left:5px;top:5px" width="22" height="22" viewBox="0 0 24 24"><path fill="#fff" d="M19.350 10.040C18.670 6.590 15.640 4 12 4 9.110 4 6.600 5.640 5.350 8.040 2.340 8.360 0 10.910 0 14c0 3.310 2.690 6 6 6h13c2.760 0 5-2.240 5-5 0-2.640-2.050-4.780-4.650-4.960zM19 18H6c-2.210 0-4-1.790-4-4 0-2.050 1.530-3.760 3.560-3.970l1.070-.11.500-.95C8.080 7.140 9.940 6 12 6c2.620 0 4.880 1.860 5.390 4.430l.3 1.500 1.530.11c1.560.1 2.780 1.410 2.780 2.960 0 1.650-1.350 3-3 3zM8 13h2.550v3h2.900v-3H16l-4-4z"/></svg></div>
<div class="tb" style="left:830.200px"><svg style="left:5px;top:5px" width="22" height="22" viewBox="0 0 24 24"><path fill="#fff" d="M19.350 10.040C18.670 6.590 15.640 4 12 4 9.110 4 6.600 5.640 5.350 8.040 2.340 8.360 0 10.910 0 14c0 3.310 2.690 6 6 6h13c2.760 0 5-2.240 5-5 0-2.640-2.050-4.780-4.650-4.960zM19 18H6c-2.210 0-4-1.790-4-4 0-2.050 1.530-3.760 3.560-3.970l1.070-.11.500-.95C8.080 7.140 9.940 6 12 6c2.620 0 4.880 1.860 5.390 4.430l.3 1.500 1.530.11c1.560.1 2.780 1.410 2.780 2.960 0 1.650-1.350 3-3 3zm-5.550-8h-2.900v3H8l4 4 4-4h-2.550z"/></svg></div>
<div class="tb" style="left:869.600px"><svg style="left:5px;top:5px" width="22" height="22" viewBox="0 0 24 24"><path fill="#fff" d="M17.650 6.350C16.200 4.900 14.210 4 12 4c-4.420 0-7.990 3.580-7.990 8s3.570 8 7.990 8c3.730 0 6.840-2.550 7.730-6h-2.080c-.82 2.330-3.040 4-5.650 4-3.310 0-6-2.690-6-6s2.690-6 6-6c1.660 0 3.140.69 4.220 1.780L13 11h7V4l-2.350 2.350z"/></svg></div>
<div class="tb" style="left:909.200px"><svg style="left:5px;top:5px" width="22" height="22" viewBox="0 0 24 24"><path fill="#fff" d="M12 8c-2.210 0-4 1.790-4 4s1.790 4 4 4 4-1.790 4-4-1.790-4-4-4zm8.940 3c-.46-4.170-3.770-7.480-7.940-7.940V1h-2v2.060C6.830 3.520 3.520 6.830 3.060 11H1v2h2.060c.46 4.170 3.770 7.480 7.940 7.940V23h2v-2.060c4.170-.46 7.480-3.770 7.940-7.940H23v-2h-2.060zM12 19c-3.870 0-7-3.130-7-7s3.130-7 7-7 7 3.130 7 7-3.130 7-7 7z"/></svg></div>
<div class="tb" style="left:949px;width:33px"><svg style="left:5.500px;top:5px" width="22" height="22" viewBox="0 0 24 24"><path fill="#fff" d="M11 7h2v2h-2zm0 4h2v6h-2zm1-9C6.480 2 2 6.480 2 12s4.480 10 10 10 10-4.480 10-10S17.520 2 12 2zm0 18c-4.410 0-8-3.590-8-8s3.590-8 8-8 8 3.590 8 8-3.590 8-8 8z"/></svg></div>
<div class="tb" style="left:982.500px;width:29.500px"><svg style="left:8.800px;top:12.500px" width="12" height="6"><path d="M0 0 H12 L6 6 Z" fill="#fff"/></svg></div>
<div class="tb" style="left:1018.800px;width:32.500px"><svg style="left:5.200px;top:5px" width="22" height="22" viewBox="0 0 24 24"><path fill="#fff" d="M7 2v11h3v9l7-12h-4l4-8z"/></svg></div>
<div class="t" style="left:1070px;top:140px;font-size:12px;color:#f0f0f0;letter-spacing:-0.350px">ID 99951</div>

<!-- subtabs -->
<svg class="ic" style="left:481.400px;top:180.200px" width="18" height="20" viewBox="0 0 18 20"><g fill="#fff"><circle cx="8.900" cy="6.600" r="3.600"/><circle cx="8.900" cy="3.100" r="2.700"/><circle cx="11.950" cy="4.850" r="2.700"/><circle cx="11.950" cy="8.350" r="2.700"/><circle cx="8.900" cy="10.100" r="2.700"/><circle cx="5.850" cy="8.350" r="2.700"/><circle cx="5.850" cy="4.850" r="2.700"/><path d="M8.700 19.500 C4.400 19.500 0.800 16 0.600 11.300 C5.200 11.500 8.600 15 8.700 19.500 Z"/><path d="M9.100 19.500 C13.400 19.500 17 16 17.200 11.300 C12.600 11.500 9.200 15 9.100 19.500 Z"/></g><g fill="#383b3e"><circle cx="8.900" cy="3.100" r="0.650"/><circle cx="11.950" cy="4.850" r="0.650"/><circle cx="11.950" cy="8.350" r="0.650"/><circle cx="8.900" cy="10.100" r="0.650"/><circle cx="5.850" cy="8.350" r="0.650"/><circle cx="5.850" cy="4.850" r="0.650"/></g><path d="M3.300 14 L5.900 16.700 M14.500 14 L11.900 16.700" stroke="#383b3e" stroke-width="0.700" stroke-dasharray="1.300 0.700"/></svg>
<div class="t" style="left:506.700px;top:181.500px;font-size:12.350px;color:#b3b5b7">Betrachten</div>
<div class="a" style="left:581px;top:173.500px;width:1px;height:32.500px;background:#585b5e"></div>
<svg class="ic" style="left:592.500px;top:182.500px" width="19" height="16" viewBox="0 0 19 16"><path d="M5.600 2.700 L6.800 1 H12.200 L13.400 2.700 H16.400 Q17.900 2.700 17.900 4.200 V13.500 Q17.900 15 16.400 15 H2.600 Q1.100 15 1.100 13.500 V4.200 Q1.100 2.700 2.600 2.700 Z" fill="none" stroke="#fff" stroke-width="1.900" stroke-linejoin="round"/><circle cx="9.500" cy="8.800" r="3.500" fill="none" stroke="#fff" stroke-width="1.500"/><path d="M9.500 7.300 V10.300 M8 8.800 H11" stroke="#fff" stroke-width="1.100"/></svg>
<div class="t" style="left:618.700px;top:181.500px;font-size:12.500px;color:#b3b5b7;width:155px;overflow:hidden">eingebettete Metainformationen</div>
<!-- active subtab -->
<div class="a" style="left:811.500px;top:173px;width:210px;height:33px;background:#fff;box-shadow:0 0 3px rgba(0,0,0,.5)"></div>
<div class="a" style="left:448px;top:205.700px;width:715px;height:42px;background:#f6f6f6"></div>
<div class="a" style="left:812px;top:200px;width:209px;height:8px;background:#fff"></div>
<svg class="ic" style="left:820.750px;top:180.250px" width="21" height="21" viewBox="0 0 24 24"><path fill="#0c0c0c" d="M19 3H5c-1.100 0-2 .9-2 2v7c0 1.100.9 2 2 2h14c1.100 0 2-.9 2-2V5c0-1.100-.9-2-2-2zM5 10h3.130c.21.780.67 1.470 1.270 2H5v-2zm14 2h-4.400c.6-.53 1.060-1.220 1.270-2H19v2zm0-4h-5v1c0 1.070-.93 2-2 2s-2-.93-2-2V8H5V5h14v3zm-2 7h-3v1c0 .47-.19.900-.48 1.250-.37.450-.92.750-1.520.750s-1.150-.3-1.520-.750c-.29-.350-.48-.780-.48-1.250v-1H3v4c0 1.100.9 2 2 2h14c1.100 0 2-.9 2-2v-4h-4zM5 17h3.130c.2.090.6.170.9.250.24.680.65 1.280 1.180 1.750H5v-2zm14 2h-4.400c.54-.47.950-1.070 1.180-1.750.03-.8.070-.16.090-.25H19v2z"/></svg>
<div class="t" style="left:848.300px;top:181.500px;font-size:12.570px;color:#1b1e21">benutzerdefinierte Metadaten</div>
<!-- Eigenschaften -->
<svg class="ic" style="left:1035.500px;top:180.500px" width="20" height="20" viewBox="0 0 24 24"><path fill="#fff" d="M3 17v2h6v-2H3zM3 5v2h10V5H3zm10 16v-2h8v-2h-8v-2h-2v6h2zM7 9v2H3v2h4v2h2V9H7zm14 4v-2H11v2h10zm-6-4h2V7h4V5h-4V3h-2v6z"/></svg>
<div class="t" style="left:1063px;top:181.500px;font-size:11.900px;color:#b3b5b7">Eigenschaften</div>
<svg class="ic" style="left:1148px;top:183.500px" width="9" height="14" viewBox="0 0 9 14"><path d="M1.500 1 L7.500 7 L1.500 13" fill="none" stroke="#6b6e71" stroke-width="2"/></svg>

<!-- form row -->
<div class="t" style="left:459.400px;top:220px;font-size:12.250px;color:#40454a">Hinzufügen</div>
<div class="a" style="left:542px;top:214px;width:152.500px;height:28.500px;background:#fff;border:1px solid #d2d2d2"></div>
<div class="t" style="left:552px;top:220.800px;font-size:12.250px;color:#8b8b8b">Name</div>
<div class="a" style="left:703px;top:214px;width:107.500px;height:28.500px;background:#fff;border:1px solid #d2d2d2"></div>
<div class="t" style="left:713.200px;top:220.800px;font-size:12.250px;color:#474b50;width:59px;overflow:hidden">Eingabefeld</div>
<svg class="ic" style="left:791.500px;top:227px" width="8" height="5"><path d="M0 0 H8 L4 4.500 Z" fill="#8a8a8a"/></svg>
<div class="a" style="left:818px;top:214px;width:134.500px;height:28.500px;background:#fff;border:1px solid #d2d2d2"></div>
<div class="t" style="left:828px;top:220.800px;font-size:12.250px;color:#8b8b8b">Sprache</div>
<svg class="ic" style="left:933px;top:227px" width="8" height="5"><path d="M0 0 H8 L4 4.500 Z" fill="#8a8a8a"/></svg>
<div class="a" style="left:960.500px;top:214.500px;width:28px;height:28px;background:#f4f4f4;border:1px solid #e5e5e5"></div>
<svg class="ic" style="left:965.300px;top:219.300px" width="18" height="18" viewBox="0 0 18 18"><circle cx="9" cy="9" r="8.800" fill="#21a04c"/><path d="M9 4.500 V13.500 M4.500 9 H13.500" stroke="#fff" stroke-width="2"/></svg>
<div class="a" style="left:1021.500px;top:221.500px;width:1px;height:13px;background:#d0d0d0"></div>
<div class="a" style="left:1056px;top:214.500px;width:107px;height:28px;background:#f4f4f4;border:1px solid #e5e5e5;border-right:none"></div>
<svg class="ic" style="left:1061.800px;top:219.300px" width="18" height="18" viewBox="0 0 18 18"><circle cx="9" cy="9" r="8.800" fill="#21a04c"/><path d="M9 4.500 V13.500 M4.500 9 H13.500" stroke="#fff" stroke-width="2"/></svg>
<div class="t" style="left:1088.700px;top:219.500px;font-size:11.900px;color:#53585d;width:74px;overflow:hidden">Vordefinierte Definitionen</div>

<!-- grid -->
<div class="a" style="left:448px;top:247.800px;width:715px;height:21px;background:#d3d3d3"></div>
<div class="a" style="left:448px;top:268.700px;width:715px;height:560px;background:#f5f5f5"></div>
<div class="a" style="left:448px;top:268.700px;width:698px;height:22.500px;background:#fff;border-bottom:1px solid #ececec"></div>
<div class="a" style="left:483px;top:249px;width:1px;height:19px;background:#4a4a4a"></div>
<div class="a" style="left:690px;top:249px;width:1px;height:19px;background:#4a4a4a"></div>
<div class="a" style="left:762px;top:249px;width:1px;height:19px;background:#4a4a4a"></div>
<div class="a" style="left:1073px;top:249px;width:1px;height:19px;background:#4a4a4a"></div>
<div class="a" style="left:1109px;top:249px;width:1px;height:19px;background:#4a4a4a"></div>
<div class="a" style="left:483px;top:269px;width:1px;height:22px;background:#ebebeb"></div>
<div class="a" style="left:690px;top:269px;width:1px;height:22px;background:#ebebeb"></div>
<div class="a" style="left:762px;top:269px;width:1px;height:22px;background:#ebebeb"></div>
<div class="a" style="left:1073px;top:269px;width:1px;height:22px;background:#ebebeb"></div>
<div class="a" style="left:1109px;top:269px;width:1px;height:22px;background:#ebebeb"></div>
<div class="a" style="left:1145.500px;top:269px;width:1px;height:22px;background:#ebebeb"></div>
<div class="t" style="left:457.300px;top:250.600px;font-size:10.300px;color:#444">Typ</div>
<div class="t" style="left:493.500px;top:250.600px;font-size:10.300px;color:#444">Name</div>
<div class="t" style="left:700.500px;top:250.600px;font-size:10.300px;color:#444">Sprache</div>
<div class="t" style="left:771.700px;top:250.600px;font-size:10.300px;color:#444">Wert</div>
<svg class="ic" style="left:459px;top:274.500px" width="14" height="9" viewBox="0 0 14 9"><rect x="0" y="2" width="13" height="6.600" fill="#3f7ae0"/><path d="M9.500 4.500 L13.300 0.400 L14 1.200 L10.500 5.200 Z" fill="#3f7ae0"/><rect x="1.600" y="4.200" width="6" height="2" fill="#8fb2ef"/></svg>
<div class="t" style="left:493.500px;top:272.200px;font-size:12.400px;color:#3b4046">copyright</div>
<svg class="ic" style="left:1120px;top:272.500px" width="15" height="15" viewBox="0 0 15 15"><circle cx="7.500" cy="7.500" r="7.200" fill="#e53b30"/><path d="M4.700 4.700 L10.300 10.300 M10.300 4.700 L4.700 10.300" stroke="#fff" stroke-width="1.700"/></svg>
<!-- value cell w/ red rect -->
<div class="a" style="left:762.300px;top:267.900px;width:312.100px;height:25.700px;background:#fff;border:2px solid #e8141c;box-shadow:1px 2px 3px rgba(0,0,0,.45),inset 1px 2px 3px rgba(0,0,0,.28)"></div>
<div class="t" style="left:772.500px;top:272.200px;font-size:12.020px;color:#3b4046">DAV Sektion Königsberg, Foto: Ulrich Gimbal</div>

<!-- panel right edge line -->
<div class="a" style="left:1163px;top:93px;width:1px;height:735px;background:#e9e9e9"></div>

<!-- ================= ANNOTATIONS ================= -->
<!-- red rect on subtab -->
<div class="a" style="left:815px;top:177px;width:203px;height:29.800px;border:2px solid #e8141c;box-shadow:1px 2px 4px rgba(0,0,0,.45),inset 1px 2px 3px rgba(0,0,0,.25)"></div>
<!-- circle 2 -->
<div class="a" style="left:775.300px;top:177.200px;width:30.200px;height:30.200px;border-radius:50%;background:#f30a0a"></div>
<div class="t" style="left:775.500px;top:181.500px;width:29.500px;text-align:center;font-size:18px;line-height:22px;color:#fff">2</div>
<!-- circle 3 -->
<div class="a" style="left:724px;top:265.800px;width:29.300px;height:29.300px;border-radius:50%;background:#f30a0a"></div>
<div class="t" style="left:723.500px;top:269.500px;width:29px;text-align:center;font-size:18px;line-height:22px;color:#fff">3</div>
<!-- circle 1 -->
<div class="a" style="left:81px;top:400.500px;width:29px;height:29px;border-radius:50%;background:#f30a0a"></div>
<div class="t" style="left:81px;top:404.500px;width:29px;text-align:center;font-size:18px;line-height:22px;color:#fff">1</div>
<!-- arrow -->
<svg class="ic" style="left:118px;top:398px" width="106" height="36" viewBox="0 0 106 36"><defs><filter id="sh" x="-10%" y="-30%" width="120%" height="170%"><feGaussianBlur stdDeviation="1.200"/></filter></defs><path d="M4 15.300 L67 14.500 L65 5.500 L100.500 18 L66.500 31.500 L67.500 21 L4 20.500 Z" fill="#000" opacity=".35" transform="translate(1.500,2.500)" filter="url(#sh)"/><path d="M3.500 14.800 L66 14.300 L65 5 L99.500 17 L65.500 30 L66.500 20.500 L3.500 20 Z" fill="#f30a0a"/></svg>
<!-- cursor hand -->
<svg class="ic" style="left:844px;top:197px" width="31" height="35" viewBox="0 0 31 35"><path d="M9.800 20.500 L9.800 3.200 Q9.800 1.200 12 1.200 Q14.300 1.200 14.300 3.200 L14.300 9.500 Q14.500 8.300 16.500 8.300 Q18.700 8.300 18.800 10.300 Q19 9.400 21 9.500 Q23.100 9.600 23.200 11.800 Q23.500 11 25.800 11.200 Q28.800 11.500 28.800 14.500 L28.800 23 Q28.800 27 26 30 Q22 33 17.500 32.500 Q12.500 32 9 28 L2 20.500 Q0.600 18.600 2 17.600 Q4 16.600 6 17.600 L9.800 20.500 Z" fill="#fff" stroke="#0a0a0a" stroke-width="1.500" stroke-linejoin="round"/><path d="M14.300 9.500 V16 M18.800 10.300 V16 M23.200 11.800 V16" stroke="#0a0a0a" stroke-width="1.400"/></svg>

<!--RIGHT_END-->

<!-- window border / edges -->
<div class="a" style="left:0;top:0;width:1174px;height:1px;background:#93a1ac"></div>
<div class="a" style="left:1px;top:1px;width:1172px;height:1px;background:#2f3a42"></div>
<div class="a" style="left:0;top:0;width:1px;height:830px;background:rgba(150,160,175,.75)"></div>
<div class="a" style="left:1173px;top:0;width:1px;height:830px;background:#9aa5b0"></div>
<div class="a" style="left:448px;top:827px;width:716px;height:1px;background:#fff"></div>
<div class="a" style="left:55px;top:828px;width:1118px;height:1px;background:#14181c"></div>
<div class="a" style="left:0;top:829px;width:1174px;height:1px;background:rgba(140,152,163,.8)"></div>
<svg class="ic" style="left:0;top:0" width="8" height="8"><path d="M0 0 H8 A8 8 0 0 0 0 8 Z" fill="#6cb4ee"/></svg>
<svg class="ic" style="left:1166px;top:0" width="8" height="8"><path d="M8 0 H0 A8 8 0 0 1 8 8 Z" fill="#7eb2e6"/></svg>
<svg class="ic" style="left:0;top:822px" width="8" height="8"><path d="M0 8 H8 A8 8 0 0 1 0 0 Z" fill="#6d96cc"/></svg>
<svg class="ic" style="left:1166px;top:822px" width="8" height="8"><path d="M8 8 H0 A8 8 0 0 0 8 0 Z" fill="#6e9ec4"/></svg>
</body></html>
